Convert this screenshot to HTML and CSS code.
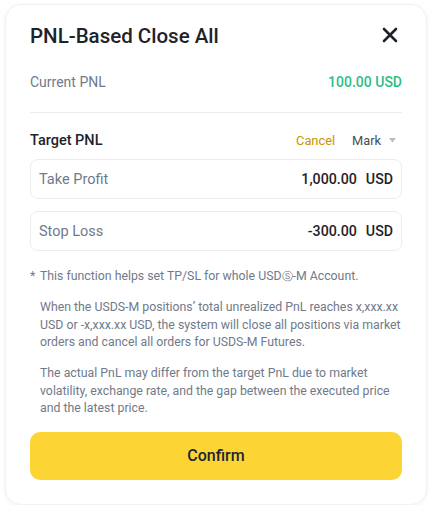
FILE: index.html
```html
<!DOCTYPE html>
<html lang="en">
<head>
<meta charset="utf-8">
<title>PNL-Based Close All</title>
<link rel="stylesheet" href="styles.css">
</head>
<body>
<div class="card">
  <div class="header">
    <h1 class="title">PNL-Based Close All</h1>
    <svg class="close" width="16" height="16" viewBox="0 0 16 16" aria-label="Close">
      <path d="M2 2 L14 14 M14 2 L2 14" stroke="#1E2329" stroke-width="2.6" stroke-linecap="round" fill="none"/>
    </svg>
  </div>
  <div class="row current">
    <span class="muted">Current PNL</span>
    <span class="green">100.00 USD</span>
  </div>
  <div class="divider"></div>
  <div class="row target">
    <span class="target-label">Target PNL</span>
    <div class="actions">
      <span class="cancel">Cancel</span>
      <span class="mark">Mark <svg class="caret" width="7" height="5" viewBox="0 0 7 5"><path d="M0 0 H7 L3.5 4.5 Z" fill="#B7BDC6"/></svg></span>
    </div>
  </div>
  <div class="field first">
    <span class="field-label">Take Profit</span>
    <span class="field-value">1,000.00<span class="unit">USD</span></span>
  </div>
  <div class="field second">
    <span class="field-label">Stop Loss</span>
    <span class="field-value">-300.00<span class="unit">USD</span></span>
  </div>
  <div class="notes">
    <p class="note star"><span class="ast">*</span>This function helps set TP/SL for whole USD<span class="circ">Ⓢ</span>-M Account.</p>
    <p class="note p2">When the USDS-M positions’ total unrealized PnL reaches x,xxx.xx<br>USD or -x,xxx.xx USD, the system will close all positions via market<br>orders and cancel all orders for USDS-M Futures.</p>
    <p class="note p3">The actual PnL may differ from the target PnL due to market<br>volatility, exchange rate, and the gap between the executed price<br>and the latest price.</p>
  </div>
  <button class="confirm">Confirm</button>
</div>
</body>
</html>
```
FILE: styles.css
```css
* { box-sizing: border-box; }
html, body { margin: 0; padding: 0; background: #ffffff; }
body {
  font-family: Roboto, "Noto Sans", "Liberation Sans", sans-serif;
  color: #1E2329;
}
.card {
  margin: 4px 5px 0 5px;
  width: 422px;
  height: 501px;
  border: 1px solid #F1F2F4;
  border-radius: 16px;
  box-shadow: 0 1px 4px rgba(0, 0, 0, 0.06);
  padding: 0 24px;
  background: #fff;
}
.header {
  display: flex;
  align-items: center;
  justify-content: space-between;
  padding-top: 19px;
  height: 43px;
}
.title {
  margin: 0;
  font-size: 20.5px;
  line-height: 24px;
  font-weight: 500;
}
.close { margin-right: 4px; margin-top: -2px; }
.row {
  display: flex;
  align-items: center;
  justify-content: space-between;
  height: 20px;
  font-size: 14px;
  line-height: 20px;
}
.current { margin-top: 24px; }
.muted { color: #707A8A; }
.green { color: #2EBD85; font-weight: 500; }
.divider {
  margin-top: 20px;
  height: 1px;
  background: #EAECEF;
}
.target { margin-top: 18px; }
.target-label { font-weight: 500; font-size: 14.5px; }
.actions { display: flex; align-items: center; gap: 17px; margin-right: 6px; }
.cancel { color: #C99400; font-size: 12.8px; }
.mark { color: #474D57; font-size: 12.8px; display: flex; align-items: center; gap: 8px; }
.caret { margin-top: -1px; }
.field {
  display: flex;
  align-items: center;
  justify-content: space-between;
  height: 40px;
  border: 1px solid #EAECEF;
  border-radius: 8px;
  padding: 0 8px;
  font-size: 14px;
}
.field.first { margin-top: 8px; }
.field.second { margin-top: 12px; }
.field-label { color: #707A8A; font-size: 14.5px; }
.field-value { font-weight: 500; font-size: 14.2px; }
.unit { margin-left: 9px; }
.notes { margin-top: 17px; }
.note {
  margin: 0;
  font-size: 12.3px;
  line-height: 17.5px;
  color: #707A8A;
  padding-left: 10px;
  white-space: nowrap;
}
.note.star { position: relative; }
.ast { position: absolute; left: 0; top: 0; }
.circ { font-size: 11px; }
.p2 { margin-top: 13.5px; }
.p3 { margin-top: 13.5px; }
.confirm {
  display: block;
  width: 100%;
  margin-top: 14px;
  height: 48px;
  border: none;
  border-radius: 10px;
  background: #FCD535;
  color: #202630;
  font-family: inherit;
  font-size: 16px;
  font-weight: 500;
}
```
